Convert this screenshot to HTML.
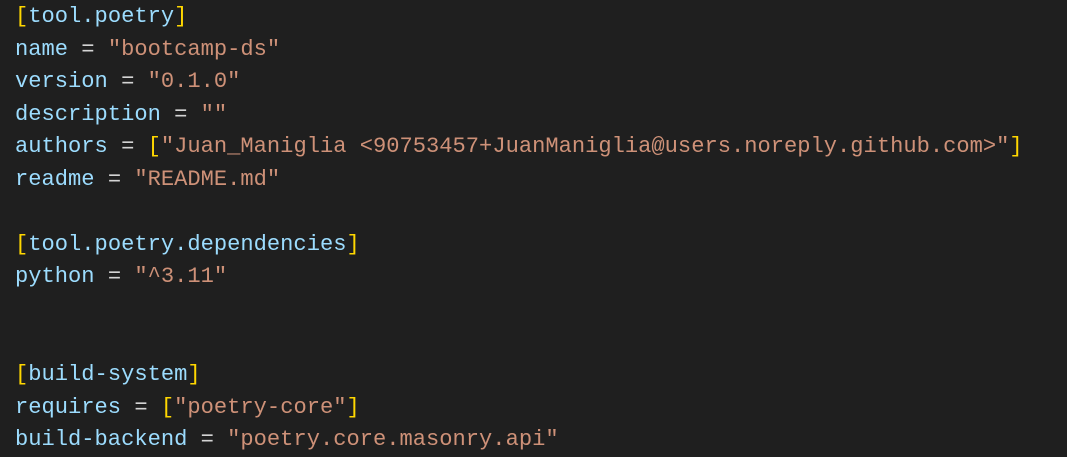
<!DOCTYPE html>
<html><head><style>
html,body{margin:0;padding:0;background:#1f1f1f;width:1067px;height:457px;overflow:hidden}
pre{margin:0;position:absolute;left:15px;top:1px;font-family:"Liberation Mono",monospace;font-size:22.1px;line-height:32.55px;color:#d4d4d4}
.k{color:#9cdcfe}.s{color:#ce9178}.b{color:#ffd700}
</style></head><body>
<pre><span class="b">[</span><span class="k">tool.poetry</span><span class="b">]</span>
<span class="k">name</span> = <span class="s">"bootcamp-ds"</span>
<span class="k">version</span> = <span class="s">"0.1.0"</span>
<span class="k">description</span> = <span class="s">""</span>
<span class="k">authors</span> = <span class="b">[</span><span class="s">"Juan_Maniglia &lt;90753457+JuanManiglia@users.noreply.github.com&gt;"</span><span class="b">]</span>
<span class="k">readme</span> = <span class="s">"README.md"</span>

<span class="b">[</span><span class="k">tool.poetry.dependencies</span><span class="b">]</span>
<span class="k">python</span> = <span class="s">"^3.11"</span>


<span class="b">[</span><span class="k">build-system</span><span class="b">]</span>
<span class="k">requires</span> = <span class="b">[</span><span class="s">"poetry-core"</span><span class="b">]</span>
<span class="k">build-backend</span> = <span class="s">"poetry.core.masonry.api"</span></pre>
</body></html>
